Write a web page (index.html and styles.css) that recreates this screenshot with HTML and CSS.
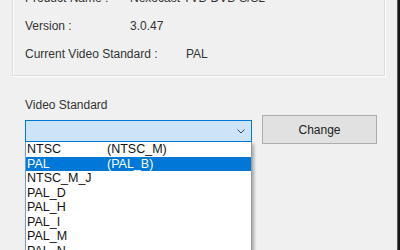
FILE: index.html
```html
<!DOCTYPE html>
<html lang="en">
<head>
  <meta charset="UTF-8">
  <title>Video Standard</title>
  <link rel="stylesheet" href="styles.css">
</head>
<body>
  <div class="window">
    <div class="content">
      <div class="info-box">
        <div class="info-row">
          <span class="info-label">Product Name :</span>
          <span class="info-value">Nexocast TVB-DVB-S/S2</span>
        </div>
        <div class="info-row">
          <span class="info-label">Version :</span>
          <span class="info-value">3.0.47</span>
        </div>
        <div class="info-row">
          <span class="info-label wide">Current Video Standard :</span>
          <span class="info-value">PAL</span>
        </div>
      </div>

      <div class="std-label">Video Standard</div>
      <div class="std-row">
        <div class="combo-wrap">
          <div class="combo">
            <svg class="chevron" width="8" height="5" viewBox="0 0 8 5"><path d="M0.5 0.5 L4 4 L7.5 0.5" fill="none" stroke="#444" stroke-width="1"/></svg>
          </div>
          <ul class="combo-list">
            <li><span class="code">NTSC</span><span>(NTSC_M)</span></li>
            <li class="selected"><span class="code">PAL</span><span>(PAL_B)</span></li>
            <li><span class="code">NTSC_M_J</span></li>
            <li><span class="code">PAL_D</span></li>
            <li><span class="code">PAL_H</span></li>
            <li><span class="code">PAL_I</span></li>
            <li><span class="code">PAL_M</span></li>
            <li><span class="code">PAL_N</span></li>
          </ul>
        </div>
        <button class="change-btn">Change</button>
      </div>
    </div>
    <div class="edge"></div>
  </div>
</body>
</html>
```

FILE: styles.css
```css
html, body {
  margin: 0;
  height: 100%;
  overflow: hidden;
}
body {
  font-family: 'Liberation Sans', Arial, sans-serif;
  font-size: 12px;
  background: #f0f0f0;
  color: #333;
}
.window {
  display: flex;
  height: 250px;
}
.content {
  width: 397px;
  padding-left: 12px;
  box-sizing: border-box;
}
.edge {
  width: 3px;
  background: linear-gradient(90deg, #8a8a8a, #1c1c1c 35%, #111);
}
.info-box {
  width: 373px;
  box-sizing: border-box;
  margin-top: -18px;
  padding: 1px 12px 7px;
  border: 1px solid #dcdcdc;
  box-shadow: inset 1px 1px 0 #fff, 1px 1px 0 #fff;
}
.info-row {
  display: flex;
  height: 28px;
  line-height: 28px;
}
.info-label {
  width: 105px;
}
.info-label.wide {
  width: 161px;
}
.std-label {
  margin: 22px 0 0 13px;
  line-height: 15px;
}
.std-row {
  display: flex;
  align-items: flex-start;
  gap: 10px;
  margin: 2px 0 0 13px;
}
.combo-wrap {
  position: relative;
  margin-top: 5px;
}
.combo {
  width: 227px;
  height: 22px;
  box-sizing: border-box;
  border: 1px solid #0078d7;
  background: #cce4f7;
  display: flex;
  align-items: center;
  justify-content: flex-end;
  padding-right: 6px;
}
.chevron {
  display: block;
}
.combo-list {
  position: absolute;
  top: 22px;
  left: 0;
  width: 227px;
  box-sizing: border-box;
  margin: 0;
  padding: 0;
  list-style: none;
  background: #fff;
  border: 1px solid #7a9cc4;
  border-top: none;
  border-right-color: #9a9a9a;
  box-shadow: 2px 2px 3px rgba(0, 0, 0, 0.3);
  color: #111;
}
.combo-list li {
  display: flex;
  height: 14.5px;
  line-height: 14.5px;
  padding-left: 1px;
  font-size: 12.5px;
}
.combo-list li.selected {
  background: #0078d7;
  color: #fff;
}
.code {
  width: 80px;
}
.change-btn {
  width: 115px;
  height: 29px;
  border: 1px solid #adadad;
  background: #e1e1e1;
  font-family: 'Liberation Sans', Arial, sans-serif;
  font-size: 12px;
  color: #222;
  padding: 0;
}
```
